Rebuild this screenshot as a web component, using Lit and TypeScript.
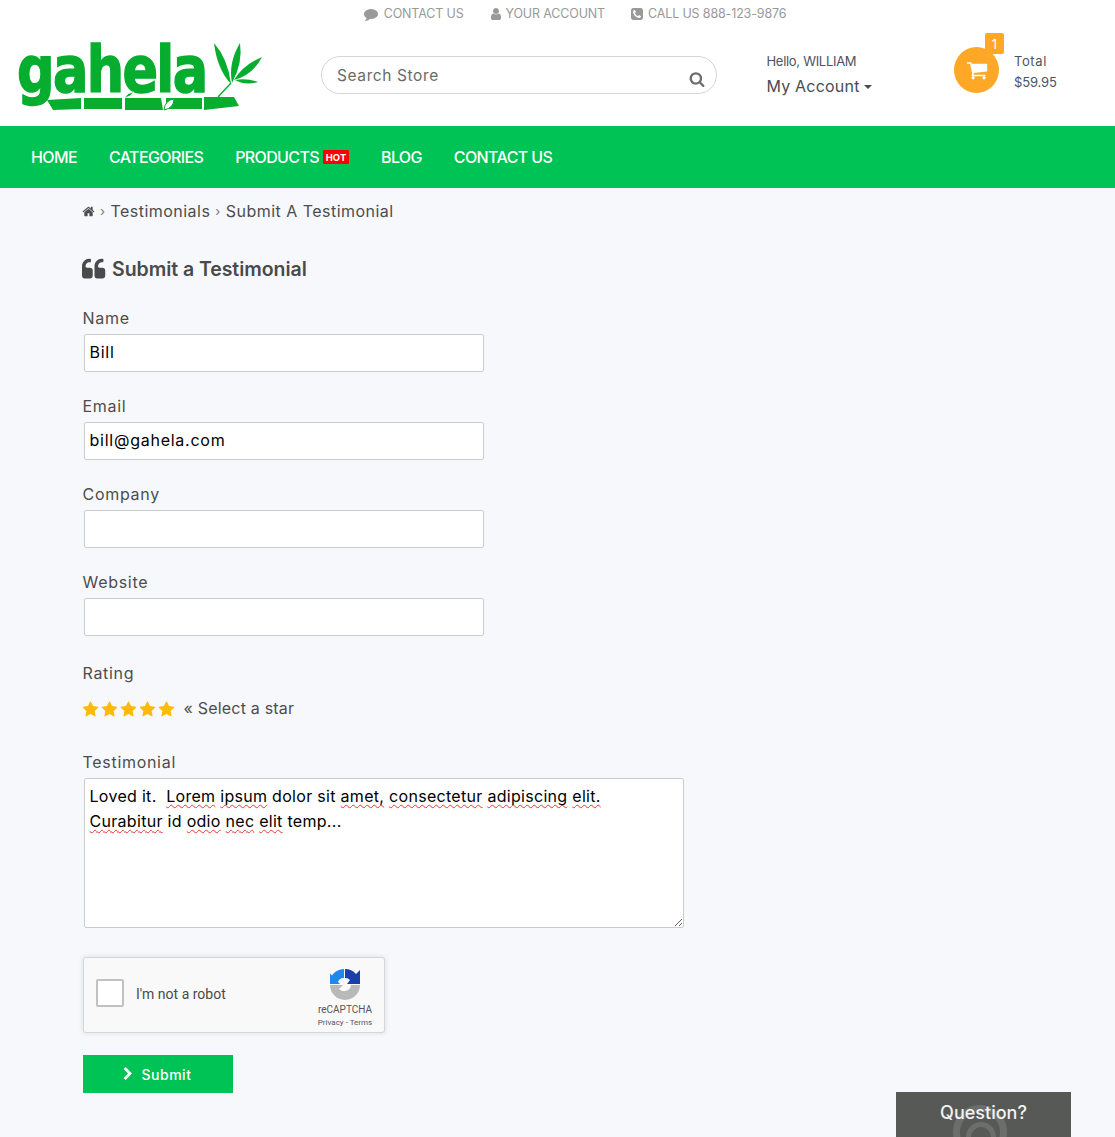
import { LitElement, html, css, svg } from "lit";
import { customElement } from "lit/decorators.js";

const P: Record<string, string> = {
  search: "M1216 832q0-185-131.500-316.500t-316.500-131.500-316.500 131.500-131.500 316.500 131.500 316.500 316.500 131.500 316.500-131.500 131.500-316.500zm512 832q0 52-38 90t-90 38q-54 0-90-38l-343-342q-179 124-399 124-143 0-273.500-55.500t-225-150-150-225-55.500-273.500 55.500-273.500 150-225 225-150 273.500-55.500 273.500 55.500 225 150 150 225 55.500 273.500q0 220-124 399l343 343q37 37 37 90z",
  star: "M1728 650q0 22-26 48l-363 354 86 500q1 7 1 20 0 21-10.500 35.500t-30.500 14.500q-19 0-40-12l-449-236-449 236q-22 12-40 12-21 0-31.500-14.500t-10.500-35.500q0-6 2-20l86-500-364-354q-25-27-25-48 0-37 56-46l502-73 225-455q19-41 49-41t49 41l225 455 502 73q56 9 56 46z",
  cart: "M704 1536q0 52-38 90t-90 38-90-38-38-90 38-90 90-38 90 38 38 90zm896 0q0 52-38 90t-90 38-90-38-38-90 38-90 90-38 90 38 38 90zm128-1088v512q0 24-16.500 42.500t-40.500 21.500l-1044 122q13 60 13 70 0 16-24 64h920q26 0 45 19t19 45-19 45-45 19h-1024q-26 0-45-19t-19-45q0-11 8-31.500t16-36 21.500-40 15.500-29.500l-177-823h-204q-26 0-45-19t-19-45 19-45 45-19h256q16 0 28.500 6.500t19.500 15.500 13 24.500 8 26 5.500 29.500 4.500 26h1201q26 0 45 19t19 45z",
  home: "M1472 992v480q0 26-19 45t-45 19h-384v-384h-256v384h-384q-26 0-45-19t-19-45v-480q0-1 .5-3t.5-3l575-474 575 474q1 2 1 6zm223-69l-62 74q-8 9-21 11h-3q-13 0-21-7l-692-577-692 577q-12 8-24 7-13-2-21-11l-62-74q-8-10-7-23.500t11-21.500l719-599q32-26 76-26t76 26l244 204v-195q0-14 9-23t23-9h192q14 0 23 9t9 23v408l219 182q10 8 11 21.500t-7 23.500z",
  quote: "M768 960v384q0 80-56 136t-136 56h-384q-80 0-136-56t-56-136v-704q0-104 40.500-198.500t109.500-163.500 163.500-109.500 198.500-40.500h64q26 0 45 19t19 45v128q0 26-19 45t-45 19h-64q-106 0-181 75t-75 181v32q0 40 28 68t68 28h224q80 0 136 56t56 136zm896 0v384q0 80-56 136t-136 56h-384q-80 0-136-56t-56-136v-704q0-104 40.500-198.500t109.500-163.500 163.500-109.500 198.500-40.500h64q26 0 45 19t19 45v128q0 26-19 45t-45 19h-64q-106 0-181 75t-75 181v32q0 40 28 68t68 28h224q80 0 136 56t56 136z",
  user: "M1536 1399q0 109-62.500 187t-150.500 78h-854q-88 0-150.500-78t-62.500-187q0-85 8.500-160.500t31.500-152 58.500-131 94-89 134.500-34.500q131 128 313 128t313-128q76 0 134.500 34.500t94 89 58.500 131 31.500 152 8.500 160.500zm-256-887q0 159-112.500 271.500t-271.500 112.500-271.500-112.500-112.500-271.500 112.500-271.500 271.500-112.500 271.500 112.500 112.500 271.500z",
  comment: "M1792 896q0 174-120 321.500t-326 233-450 85.500q-70 0-145-8-198 175-460 242-49 14-114 22-17 2-30.500-9t-17.500-29v-1q-3-4-.5-12t2-10 4.500-9.500l6-9 7-8.500 8-9q7-8 31-34.500t34.500-38 31-39.500 32.500-51 27-59 26-76q-157-89-247.500-220t-90.500-281q0-130 71-248.500t191-204.500 286-136.500 348-50.500q244 0 450 85.500t326 233 120 321.500z",
  phone: "M1408 1193q0-11-2-16t-18-16.500-40.500-25-47.500-26.500-45.500-25-28.500-15q-5-3-19-13t-25-15-21-5q-15 0-36.500 20.500t-39.500 45-38.500 45-33.500 20.500q-7 0-16.500-3.500t-15.500-6.500-17-9.500-14-8.500q-99-55-170-126.500t-127-170.500q-2-3-8.500-14t-9.500-17-6.500-15.500-3.500-16.500q0-13 20.500-33.500t45-38.500 45-39.500 20.500-36.500q0-10-5-21t-15-25-13-19q-3-6-15-28.500t-25-45.500-26.500-47.500-25-40.500-16.500-18-16-2q-48 0-101 22-46 21-80 94.500t-34 130.500q0 16 2.500 34t5 30.500 9 33 10 29.500 12.500 33 11 30q60 164 216.500 320.500t320.500 216.500q6 2 30 11t33 12.500 29.500 10 33 9 30.500 5 34 2.500q57 0 130.500-34t94.500-80q22-53 22-101zm256-777v960q0 119-84.500 203.500t-203.500 84.500h-960q-119 0-203.500-84.500t-84.500-203.500v-960q0-119 84.500-203.500t203.500-84.500h960q119 0 203.500 84.500t84.500 203.500z",
  chevron: "M1363 877l-742 742q-19 19-45 19t-45-19l-166-166q-19-19-19-45t19-45l531-531-531-531q-19-19-19-45t19-45l166-166q19-19 45-19t45 19l742 742q19 19 19 45t-19 45z",
};

const icon = (name: string, size: number, color: string) => html`<svg
  width=${size} height=${size} viewBox="0 0 1792 1792" fill=${color} style="flex:none;display:block"><path d=${P[name]}></path></svg>`;

const squiggle = (t: string) => html`<span class="sp">${t}</span>`;

@customElement("app-root")
export class AppRoot extends LitElement {
  static styles = css`
    :host { display:block; position:relative; min-height:1137px; height:1137px; overflow:hidden; background:#f7f8fc;
      font-family:Inter,"Open Sans",sans-serif; color:#4d4d4d; }
    * { box-sizing:border-box; }
    .head { background:#fff; height:126px; }
    .top { height:27px; display:flex; justify-content:center; gap:25px; padding-left:35px; align-items:center; color:#999; font-size:12.5px; letter-spacing:-.15px; }
    .top span { display:flex; align-items:center; gap:6px; }
    .top .u svg { margin-right:-3px; }
    .top .c svg { margin-right:-2px; }
    .main { display:flex; height:99px; align-items:flex-start; }
    .logo { width:321px; flex:none; position:relative; height:99px; }
    .logo-word { position:absolute; left:17px; top:-2px; font:bold 64px/90px "DejaVu Sans",sans-serif; color:#06ad2f; letter-spacing:-2px; -webkit-text-stroke:1.5px #06ad2f; transform:scaleX(.82); transform-origin:left top; }
    .logo svg { position:absolute; left:0; top:0; }
    .search { width:396px; height:38px; margin-top:29px; border:1px solid #d5d5d5; border-radius:19px; padding:0 11px 0 15px; display:flex; justify-content:space-between; align-items:center; color:#6a6a6a; font-size:15.5px; letter-spacing:.6px; }
    .search svg { margin-top:8px; }
    .acct { width:237px; flex:none; padding-left:49.5px; margin-top:24px; }
    .hello { font-size:13px; line-height:20px; color:#4a5560; letter-spacing:-.3px; }
    .my { font-size:16px; line-height:30px; color:#454d55; display:flex; align-items:center; gap:4px; letter-spacing:.2px; }
    .caret { width:0; height:0; border:4.5px solid transparent; border-top-color:#454d55; border-bottom:0; margin-top:2px; }
    .cart { width:45px; height:46px; border-radius:50%; background:#ffa726; margin-top:20px; position:relative; display:flex; align-items:center; justify-content:center; flex:none; }
    .badge { position:absolute; left:31px; top:-14px; width:19px; height:21px; background:#ffa726; border-radius:2px; color:#fff; font-size:13px; display:flex; align-items:center; justify-content:center; }
    .total { margin:24px 0 0 15px; font-size:13px; line-height:21px; color:#4a5560; letter-spacing:-.15px; }
    .total .w { letter-spacing:.6px; }
    nav { height:62px; background:#00c355; display:flex; align-items:center; padding-left:31px; gap:32px; color:#fff; font-size:16px; font-weight:500; letter-spacing:-.62px; }
    nav span { display:flex; align-items:center; }
    .hot { background:#f00; color:#fff; font-size:9.5px; font-weight:700; letter-spacing:0; width:26px; height:14px; margin-left:4px; border-radius:1px; justify-content:center; }
    main { padding:0 0 0 83px; }
    .crumbs { display:flex; align-items:center; height:20px; margin-top:13px; font-size:16px; letter-spacing:.47px; color:#4d4d4d; }
    .crumbs svg { margin-left:-1px; }
    .sep { color:#777; margin:0 5px; font-size:13px; }
    h1 { margin:37px 0 0 -1px; height:22px; display:flex; align-items:center; gap:5px; font-size:19.5px; font-weight:600; letter-spacing:-.05px; color:#4a4a4a; }
    .field { display:block; }
    label { display:block; font-size:16px; line-height:20px; color:#4d4d4d; letter-spacing:.7px; margin-left:-.5px; }
    .l1 { margin-top:28px; }
    .input { width:400px; height:38px; margin:6px 0 0 1px; border:1px solid #ccc; border-radius:2px; background:#fff; padding:0 5px 2px 4.5px; display:flex; align-items:center; font-size:16px; color:#000; letter-spacing:.75px; }
    .field + .field label { margin-top:24px; }
    .rating-l { margin-top:27px; }
    .rating { display:flex; align-items:center; margin:15px 0 0 -1px; height:20px; gap:2px; font-size:16px; letter-spacing:.2px; }
    .rating .txt { margin-left:6.5px; margin-top:-1px; }
    .rating svg { margin-top:3px; }
    .t-l { margin-top:34px; }
    .ta { width:600px; height:150px; margin:6px 0 0 1px; border:1px solid #ccc; border-radius:2px; background:#fff; padding:5px 5px 5px 4.5px; font-size:16px; line-height:25px; color:#000; resize:both; overflow:hidden; letter-spacing:.3px; }
    .sp { text-decoration:underline wavy #e33; text-decoration-thickness:1px; text-underline-offset:2px; text-decoration-skip-ink:none; }
    .rc { width:302px; height:76px; margin-top:29px; background:#f9f9f9; border:1px solid #d6d6d6; border-radius:3px; box-shadow:0 0 4px 1px rgba(0,0,0,.08); display:flex; align-items:center; position:relative; font-family:Roboto,sans-serif; }
    .box { width:28px; height:28px; margin:0 0 4px 12px; background:#fff; border:2px solid #c1c1c1; border-radius:2px; flex:none; }
    .rc-t { margin:0 0 2px 12px; font-size:14px; color:#4a4a4a; }
    .rc-r { position:absolute; right:11px; top:10px; width:56px; display:flex; flex-direction:column; align-items:center; color:#555; }
    .rc-r .a { font-size:10px; line-height:12px; margin-top:4px; }
    .rc-r .b { font-size:8px; line-height:12px; margin-top:1px; white-space:nowrap; }
    .btn { width:150px; height:38px; margin-top:22px; padding-right:4px; background:#00c355; color:#fff; font-size:14px; font-weight:500; letter-spacing:.5px; display:flex; align-items:center; justify-content:center; gap:7px; }
    .q { position:absolute; right:44px; bottom:0; width:175px; height:45px; background:#575957; color:#f2f2f2; font-size:18px; font-weight:500; text-align:center; padding-top:9px; line-height:24px; overflow:hidden; }
    .q i { position:absolute; left:57px; top:13px; width:54px; height:54px; border-radius:50%; border:7px solid rgba(255,255,255,.13); }
    .q b { position:absolute; left:70px; top:30px; width:30px; height:30px; border-radius:50%; border:5px solid rgba(255,255,255,.13); }
  `;

  logo() {
    return html`<svg width="270" height="99" viewBox="0 0 270 99">
      ${svg`<g fill="#06ad2f">
        <path d="M47 73 L81 71 V82 L53 83 Z"/>
        <path d="M84 71 H122 V82 H84 Z"/>
        <path d="M125 71 H161 L163 83 H125 Z"/>
        <path d="M166 71 H202 V82 H166 Z"/>
        <path d="M204 70 L234 70 L239 79 L204 83 Z"/>
        <path d="M214 16 Q228 32 231 57 Q217 42 214 16 Z"/>
        <path d="M240 16 Q243 36 232 56 Q228 36 240 16 Z"/>
        <path d="M262 30 Q253 48 234 53 Q243 38 262 30 Z"/>
        <path d="M258 55 Q246 59 235 53 Q247 51 258 55 Z"/>
      </g>
      <path d="M231 56 L218 70" stroke="#06ad2f" stroke-width="1.4"/>
      <path d="M164 83 Q165 73 174 72 Q174 81 164 83 Z" fill="#fff" stroke="#06ad2f" stroke-width="1"/>
      <path d="M124 71 Q128 65 134 65 Q131 70 124 71 Z" fill="#06ad2f" stroke="#fff" stroke-width=".8"/>`}
    </svg>`;
  }

  render() {
    return html`
      <div class="head">
        <div class="top">
          <span>${icon("comment", 14, "#999")}CONTACT US</span>
          <span class="u">${icon("user", 14, "#999")}YOUR ACCOUNT</span>
          <span class="c">${icon("phone", 14, "#999")}CALL US 888-123-9876</span>
        </div>
        <div class="main">
          <div class="logo"><div class="logo-word">gahela</div>${this.logo()}</div>
          <div class="search"><span>Search Store</span>${icon("search", 16, "#6d6d6d")}</div>
          <div class="acct">
            <div class="hello">Hello, WILLIAM</div>
            <div class="my">My Account<span class="caret"></span></div>
          </div>
          <div class="cart">${icon("cart", 22, "#fff")}<div class="badge">1</div></div>
          <div class="total"><span class="w">Total</span><br />$59.95</div>
        </div>
      </div>
      <nav>
        <span>HOME</span><span>CATEGORIES</span>
        <span>PRODUCTS<span class="hot">HOT</span></span>
        <span>BLOG</span><span>CONTACT US</span>
      </nav>
      <main>
        <div class="crumbs">${icon("home", 13, "#4d4d4d")}<span class="sep">›</span>Testimonials<span class="sep">›</span>Submit A Testimonial</div>
        <h1>${icon("quote", 25, "#4a4a4a")}Submit a Testimonial</h1>
        <div class="field"><label class="l1">Name</label><div class="input">Bill</div></div>
        <div class="field"><label>Email</label><div class="input">bill@gahela.com</div></div>
        <div class="field"><label>Company</label><div class="input"></div></div>
        <div class="field"><label>Website</label><div class="input"></div></div>
        <label class="rating-l">Rating</label>
        <div class="rating">
          ${[1, 2, 3, 4, 5].map(() => icon("star", 17, "#ffb907"))}
          <span class="txt">« Select a star</span>
        </div>
        <label class="t-l">Testimonial</label>
        <div class="ta">Loved it.&nbsp; ${squiggle("Lorem")} ${squiggle("ipsum")} dolor sit ${squiggle("amet,")} ${squiggle("consectetur")} ${squiggle("adipiscing")} ${squiggle("elit.")}<br />${squiggle("Curabitur")} id ${squiggle("odio")} ${squiggle("nec")} ${squiggle("elit")} temp...</div>
        <div class="rc">
          <div class="box"></div>
          <div class="rc-t">I'm not a robot</div>
          <div class="rc-r">
            <svg width="32" height="32" viewBox="0 0 32 32">
              <path d="M15 1 A15 15 0 0 0 3 7.500 L1 5.500 V16 H11 L9 14 A6 6 0 0 1 15 10 Z" fill="#1e88f0"/>
              <path d="M16 1 A15 15 0 0 1 27 6 L31 2 V16 H18 L21 12 A6 6 0 0 0 16 10 Z" fill="#1a3fa8"/>
              <path d="M1 17 H14 L10 21 A7 7 0 0 0 22 17 H31 A15 15 0 0 1 1 17 Z" fill="#b9b9b9"/>
            </svg>
            <div class="a">reCAPTCHA</div>
            <div class="b">Privacy - Terms</div>
          </div>
        </div>
        <div class="btn">${icon("chevron", 14, "#fff")}Submit</div>
      </main>
      <div class="q">Question?<i></i><b></b></div>
    `;
  }
}
